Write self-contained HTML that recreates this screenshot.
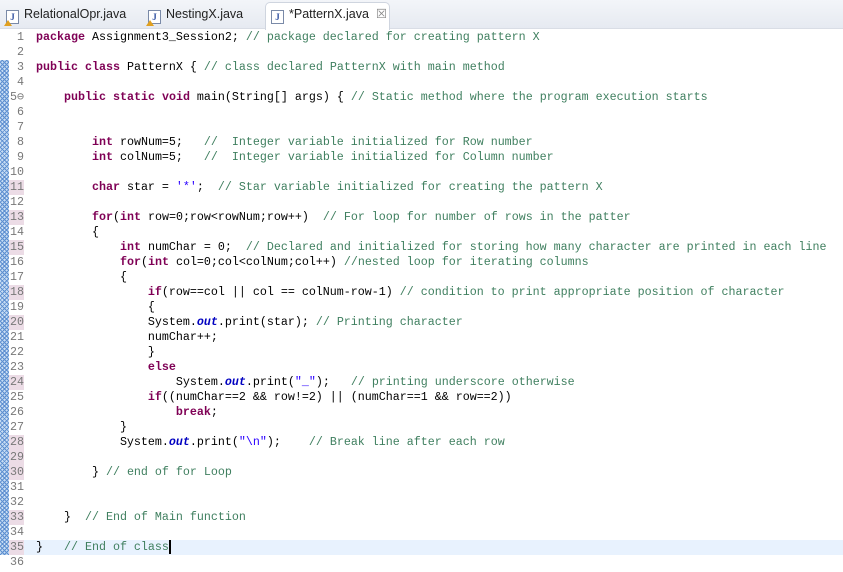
<!DOCTYPE html>
<html><head><meta charset="utf-8"><style>
html,body{margin:0;padding:0;width:843px;height:572px;overflow:hidden;background:#fff;font-family:"Liberation Sans",sans-serif}
#tabs{position:absolute;left:0;top:0;width:843px;height:28px;background:linear-gradient(#f3f5f9,#e6eaf1);border-bottom:1px solid #d9dde5}
.tab{position:absolute;top:4px;height:20px;font-size:12.5px;color:#222;line-height:20px}
.ic{display:inline-block;width:11px;height:12px;border:1px solid #7a8aa8;background:#fff;vertical-align:-2px;margin-right:5px;font:bold 9px "Liberation Serif",serif;color:#3050a0;text-align:center;line-height:12px;position:relative}
.warn:after{content:"";position:absolute;left:-3px;bottom:-3px;border-left:4px solid transparent;border-right:4px solid transparent;border-bottom:6px solid #e0a020}
#act{position:absolute;left:265px;top:2px;width:123px;height:27px;background:#fff;border:1px solid #cfd5df;border-bottom:none;border-radius:5px 5px 0 0}
#gut{position:absolute;left:0;top:60px;width:9px;height:495px;background-color:#c7dcf3;background-image:repeating-linear-gradient(45deg,#5d8fd0 0 1px,transparent 1px 3px),repeating-linear-gradient(-45deg,#5d8fd0 0 1px,transparent 1px 3px)}
#code{position:absolute;left:0;top:30px;font-family:"Liberation Mono",monospace;font-size:11.67px;color:#000}
.l{height:15px;line-height:15px;position:relative;width:843px;white-space:pre}
.n{display:inline-block;width:24px;text-align:right;color:#787878;margin-right:12px}
.m .n{background:linear-gradient(90deg,transparent 9px,#ecdce6 9px)}
.cur{background:#e8f2fe}
.k{color:#7f0055;font-weight:bold}.c{color:#3f7f5f}.s{color:#2a00ff}.o{color:#0000c0;font-weight:bold;font-style:italic}
.caret{border-left:2px solid #000}
</style></head><body>
<div id="tabs">
<div id="act"></div>
<div class="tab" style="left:6px"><span class="ic warn">J</span>RelationalOpr.java</div>
<div class="tab" style="left:148px"><span class="ic warn">J</span>NestingX.java</div>
<div class="tab" style="left:271px"><span class="ic">J</span>*PatternX.java&nbsp;&nbsp;<span style="color:#888">☒</span></div>
</div>
<div id="code"><div class="l"><span class="n">1</span><span class="k">package</span> Assignment3_Session2; <span class="c">// package declared for creating pattern X</span></div><div class="l"><span class="n">2</span></div><div class="l"><span class="n">3</span><span class="k">public</span> <span class="k">class</span> PatternX { <span class="c">// class declared PatternX with main method</span></div><div class="l"><span class="n">4</span></div><div class="l"><span class="n">5⊖</span>    <span class="k">public</span> <span class="k">static</span> <span class="k">void</span> main(String[] args) { <span class="c">// Static method where the program execution starts</span></div><div class="l"><span class="n">6</span></div><div class="l"><span class="n">7</span></div><div class="l"><span class="n">8</span>        <span class="k">int</span> rowNum=5;   <span class="c">//  Integer variable initialized for Row number</span></div><div class="l"><span class="n">9</span>        <span class="k">int</span> colNum=5;   <span class="c">//  Integer variable initialized for Column number</span></div><div class="l"><span class="n">10</span></div><div class="l m"><span class="n">11</span>        <span class="k">char</span> star = <span class="s">'*'</span>;  <span class="c">// Star variable initialized for creating the pattern X</span></div><div class="l"><span class="n">12</span></div><div class="l m"><span class="n">13</span>        <span class="k">for</span>(<span class="k">int</span> row=0;row&lt;rowNum;row++)  <span class="c">// For loop for number of rows in the patter</span></div><div class="l"><span class="n">14</span>        {</div><div class="l m"><span class="n">15</span>            <span class="k">int</span> numChar = 0;  <span class="c">// Declared and initialized for storing how many character are printed in each line</span></div><div class="l"><span class="n">16</span>            <span class="k">for</span>(<span class="k">int</span> col=0;col&lt;colNum;col++) <span class="c">//nested loop for iterating columns</span></div><div class="l"><span class="n">17</span>            {</div><div class="l m"><span class="n">18</span>                <span class="k">if</span>(row==col || col == colNum-row-1) <span class="c">// condition to print appropriate position of character</span></div><div class="l"><span class="n">19</span>                {</div><div class="l m"><span class="n">20</span>                System.<span class="o">out</span>.print(star); <span class="c">// Printing character</span></div><div class="l"><span class="n">21</span>                numChar++;</div><div class="l"><span class="n">22</span>                }</div><div class="l"><span class="n">23</span>                <span class="k">else</span></div><div class="l m"><span class="n">24</span>                    System.<span class="o">out</span>.print(<span class="s">"_"</span>);   <span class="c">// printing underscore otherwise</span></div><div class="l"><span class="n">25</span>                <span class="k">if</span>((numChar==2 &amp;&amp; row!=2) || (numChar==1 &amp;&amp; row==2))</div><div class="l"><span class="n">26</span>                    <span class="k">break</span>;</div><div class="l"><span class="n">27</span>            }</div><div class="l m"><span class="n">28</span>            System.<span class="o">out</span>.print(<span class="s">"\n"</span>);    <span class="c">// Break line after each row</span></div><div class="l m"><span class="n">29</span></div><div class="l m"><span class="n">30</span>        } <span class="c">// end of for Loop</span></div><div class="l"><span class="n">31</span></div><div class="l"><span class="n">32</span></div><div class="l m"><span class="n">33</span>    }  <span class="c">// End of Main function</span></div><div class="l"><span class="n">34</span></div><div class="l m cur"><span class="n">35</span>}   <span class="c">// End of class</span><span class="caret"></span></div><div class="l"><span class="n">36</span></div></div>
<div id="gut"></div>
</body></html>
